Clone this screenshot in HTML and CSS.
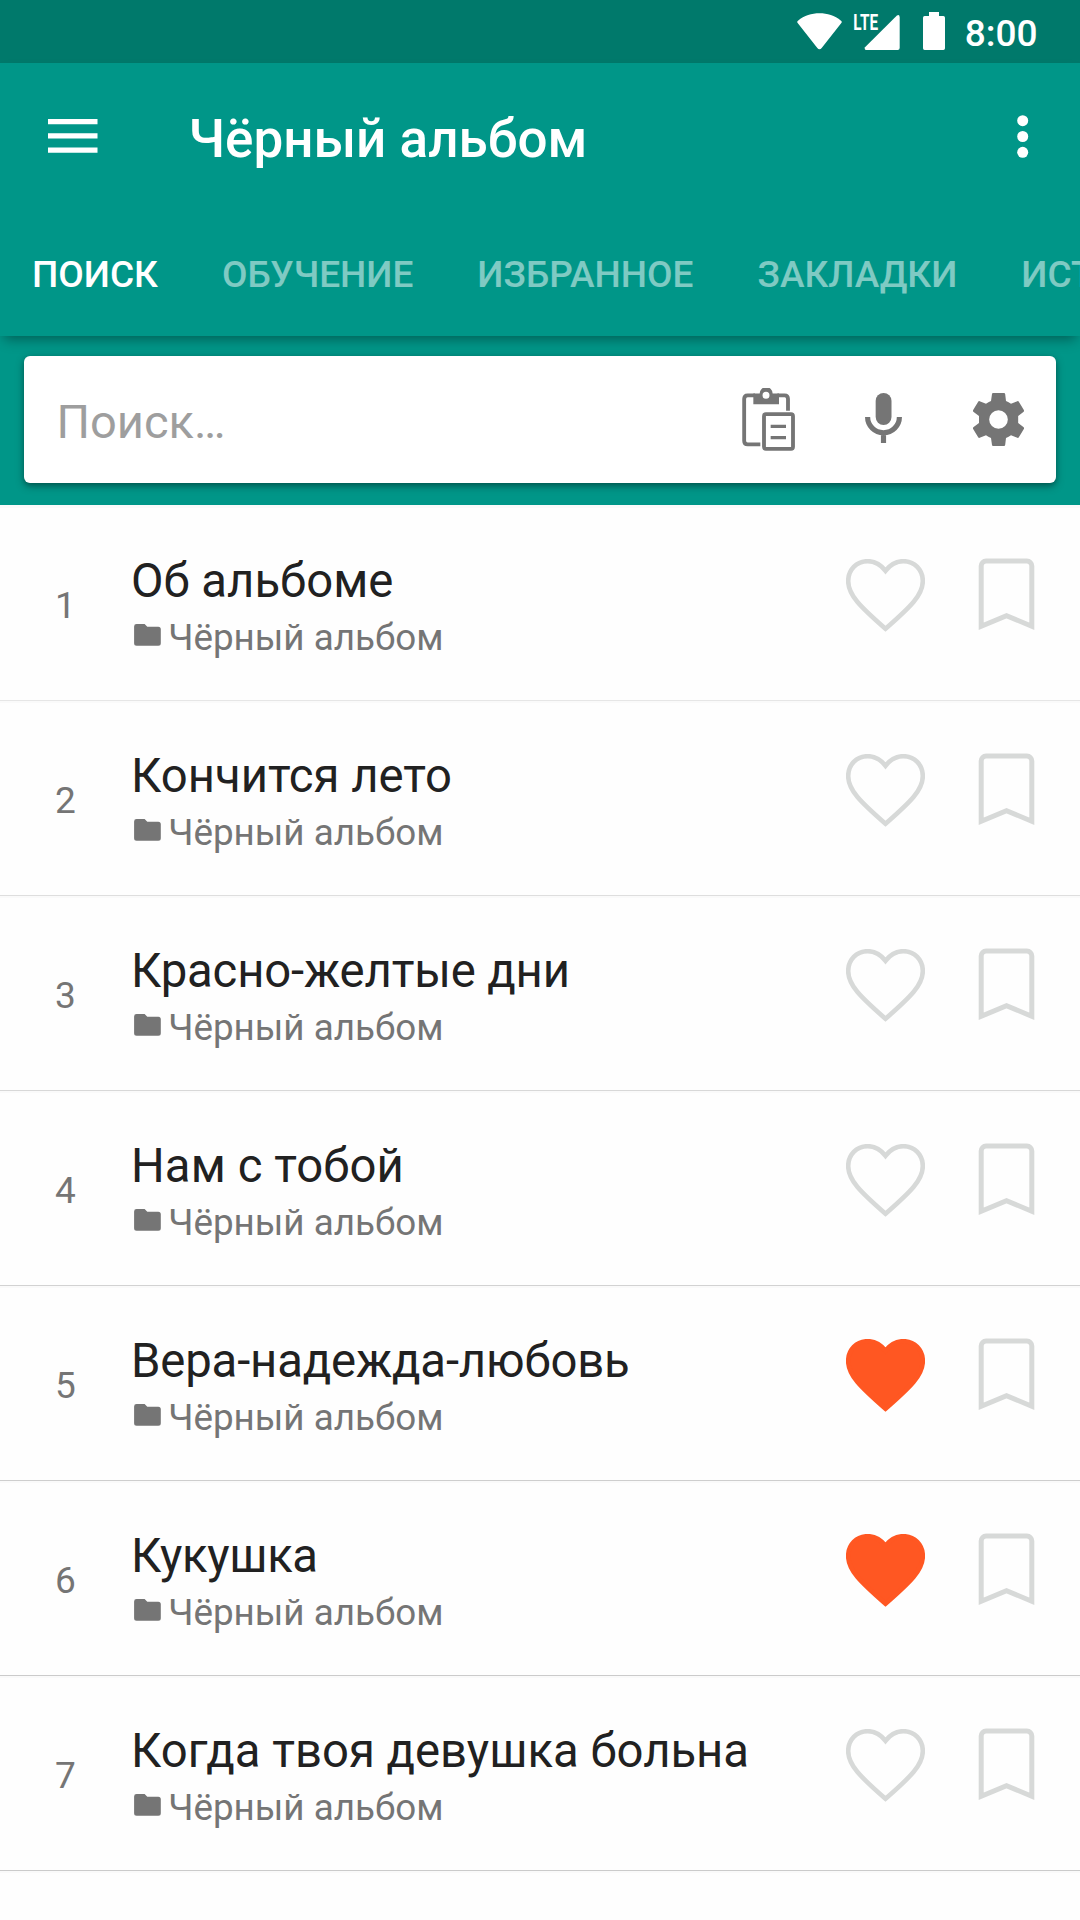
FILE: index.html
```html
<!DOCTYPE html>
<html lang="ru">
<head>
<meta charset="utf-8">
<title>Чёрный альбом</title>
<link rel="stylesheet" href="styles.css">
</head>
<body>
<svg class="sprite" aria-hidden="true">
  <symbol id="folder" viewBox="0 0 27 22"><path d="M2.6 0H10.6L13.3 2.7H24.3A2.5 2.5 0 0 1 26.8 5.2V19.2A2.5 2.5 0 0 1 24.3 21.7H2.6A2.5 2.5 0 0 1 .1 19.2V2.6A2.5 2.5 0 0 1 2.6 0Z"/></symbol>
  <symbol id="heart" viewBox="0 0 79 73"><path d="M39.5 11.7C35 6 28.5 2.2 21.7 2.2C10.5 2.2 2.2 11 2.2 22C2.2 36 14 47.5 39.5 69.8C65 47.5 76.8 36 76.8 22C76.8 11 68.5 2.2 57.3 2.2C50.5 2.2 44 6 39.5 11.7Z"/></symbol>
  <symbol id="bookmark" viewBox="0 0 57 73"><path d="M3.2 68.3V8A5 5 0 0 1 8.2 3H48.8A5 5 0 0 1 53.8 8V68.3L28.5 57.6Z"/></symbol>
</svg>

<header class="status-bar">
  <svg class="wifi" viewBox="0 0 135 111"><path d="M67.500 109Q64 109 61 105L2 30Q-1 26 3 23C22 8 44 1 67.500 1S113 8 132 23Q136 26 133 30L74 105Q71 109 67.500 109Z"/></svg>
  <svg class="signal" viewBox="0 0 141 111"><path d="M140 12V105Q140 111 134 111H38Q33 109 36 103L131 8Q139 2 140 12Z"/><text x="1" y="50" textLength="74" lengthAdjust="spacingAndGlyphs">LTE</text></svg>
  <svg class="battery" viewBox="0 0 66 114"><path d="M18 0H48V12H61Q66 12 66 17V109Q66 114 61 114H5Q0 114 0 109V17Q0 12 5 12H18Z"/></svg>
  <span class="clock">8:00</span>
</header>

<div class="app-bar">
  <div class="toolbar">
    <svg class="menu" viewBox="0 0 50 34"><path d="M0 0H49.500V5.300H0ZM0 14.200H49.500V19.500H0ZM0 28.400H49.500V33.700H0Z"/></svg>
    <h1 class="title">Чёрный альбом</h1>
    <svg class="more" viewBox="0 0 12 44"><circle cx="5.700" cy="5.700" r="5.500"/><circle cx="5.700" cy="21.500" r="5.500"/><circle cx="5.700" cy="37.300" r="5.500"/></svg>
  </div>
  <nav class="tabs">
    <span class="tab active">ПОИСК</span>
    <span class="tab">ОБУЧЕНИЕ</span>
    <span class="tab">ИЗБРАННОЕ</span>
    <span class="tab">ЗАКЛАДКИ</span>
    <span class="tab">ИСТОРИЯ</span>
  </nav>
</div>

<section class="search-panel">
  <div class="search-card">
    <span class="hint">Поиск…</span>
    <svg class="clipboard" viewBox="126 144 162 192">
      <g fill="none" stroke="#757575" stroke-width="11.500">
        <path d="M181 313H143Q132.500 313 132.500 302V177Q132.500 166 143 166H165M232 166H254Q264 166 264 177V212"/>
        <rect x="192" y="222.500" width="87" height="104" rx="6"/>
      </g>
      <path fill="#757575" fill-rule="evenodd" d="M160 160.500H179A19.500 19.500 0 0 1 218 160.500H237V193H160ZM198 155A10.500 10.500 0 1 0 198 176A10.500 10.500 0 1 0 198 155Z"/>
      <path fill="#757575" d="M212 254H258V264H212ZM212 288H258V298H212Z"/>
    </svg>
    <svg class="mic" viewBox="495 159 111 150">
      <rect x="527" y="159" width="47.500" height="96" rx="23.700" fill="#757575"/>
      <path d="M502.800 231A47.700 47.200 0 0 0 598.200 231M550.500 278V309" fill="none" stroke="#757575" stroke-width="15.500"/>
    </svg>
    <svg class="gear" viewBox="816 156 159 165"><path fill="#757575" fill-rule="evenodd" d="M879 159H912Q915 159 915.500 162L918 183Q926 186 933 191L952 183.500Q955 182.500 956.500 185L971.500 210Q973 213 971 215L954.500 228V249L971 262Q973 264 971.500 267L956.500 292Q955 294.500 952 293.500L933 286Q926 291 918 294L915.500 315Q915 318 912 318H879Q876.500 318 876 315L873 294Q865 291 858 286L839 293.500Q836 294.500 834.500 292L819.500 267Q818 264 820 262L837 249V228L820 215Q818 213 819.500 210L834.500 185Q836 182.500 839 183.500L858 191Q865 186 873 183L876 162Q876.500 159 879 159ZM895.500 210.500A28 28 0 1 0 895.500 266.500A28 28 0 1 0 895.500 210.500Z"/></svg>
  </div>
</section>

<main class="songs">
  <article class="song"><span class="num">1</span><div class="info"><h2 class="name">Об альбоме</h2><p class="album"><svg class="folder"><use href="#folder"/></svg>Чёрный альбом</p></div><svg class="heart"><use href="#heart"/></svg><svg class="bookmark"><use href="#bookmark"/></svg></article>
  <article class="song"><span class="num">2</span><div class="info"><h2 class="name">Кончится лето</h2><p class="album"><svg class="folder"><use href="#folder"/></svg>Чёрный альбом</p></div><svg class="heart"><use href="#heart"/></svg><svg class="bookmark"><use href="#bookmark"/></svg></article>
  <article class="song"><span class="num">3</span><div class="info"><h2 class="name snug">Красно-желтые дни</h2><p class="album"><svg class="folder"><use href="#folder"/></svg>Чёрный альбом</p></div><svg class="heart"><use href="#heart"/></svg><svg class="bookmark"><use href="#bookmark"/></svg></article>
  <article class="song"><span class="num">4</span><div class="info"><h2 class="name loose">Нам с тобой</h2><p class="album"><svg class="folder"><use href="#folder"/></svg>Чёрный альбом</p></div><svg class="heart"><use href="#heart"/></svg><svg class="bookmark"><use href="#bookmark"/></svg></article>
  <article class="song"><span class="num">5</span><div class="info"><h2 class="name snug">Вера-надежда-любовь</h2><p class="album"><svg class="folder"><use href="#folder"/></svg>Чёрный альбом</p></div><svg class="heart liked"><use href="#heart"/></svg><svg class="bookmark"><use href="#bookmark"/></svg></article>
  <article class="song"><span class="num">6</span><div class="info"><h2 class="name tight">Кукушка</h2><p class="album"><svg class="folder"><use href="#folder"/></svg>Чёрный альбом</p></div><svg class="heart liked"><use href="#heart"/></svg><svg class="bookmark"><use href="#bookmark"/></svg></article>
  <article class="song"><span class="num">7</span><div class="info"><h2 class="name">Когда твоя девушка больна</h2><p class="album"><svg class="folder"><use href="#folder"/></svg>Чёрный альбом</p></div><svg class="heart"><use href="#heart"/></svg><svg class="bookmark"><use href="#bookmark"/></svg></article>
  <div class="list-end"></div>
</main>
</body>
</html>
```
FILE: styles.css
```css
* { box-sizing: border-box; margin: 0; padding: 0; }
body {
  width: 1080px;
  height: 1920px;
  overflow: hidden;
  display: flex;
  flex-direction: column;
  background: #fefefe;
  font-family: Roboto, sans-serif;
}
svg { display: block; flex: none; }
.sprite { display: none; }

/* Status bar */
.status-bar {
  flex: none;
  height: 63px;
  display: flex;
  align-items: flex-start;
  justify-content: flex-end;
  padding-right: 42.5px;
  background: #00796b;
  color: #fff;
  fill: #fff;
}
.wifi { width: 45px; height: 37px; margin: 12.700px 11.300px 0 0; }
.signal { width: 47px; height: 37px; margin: 13px 23px 0 0; overflow: visible; }
.signal text { font-size: 67px; font-weight: 700; }
.battery { width: 22px; height: 38px; margin: 12px 19.700px 0 0; }
.clock { font-size: 37px; font-weight: 500; line-height: 44px; margin-top: 12px; }

/* App bar */
.app-bar {
  flex: none;
  height: 273px;
  position: relative;
  z-index: 1;
  background: #009688;
  color: #fff;
  box-shadow: 0 7px 12px -4px rgba(0, 0, 0, .38);
}
.toolbar { height: 147px; display: flex; align-items: flex-start; fill: #fff; }
.menu { width: 50px; height: 34px; margin: 56px 90.500px 0 48px; }
.title { flex: 1; font-size: 53px; font-weight: 500; line-height: 56px; margin-top: 48px; }
.more { width: 12px; height: 44px; margin: 52px 51px 0 0; }
.tabs { display: flex; height: 126px; align-items: center; padding-top: 3px; overflow: hidden; }
.tab {
  flex: none;
  padding: 0 32px;
  font-size: 37px;
  line-height: 44px;
  font-weight: 500;
  color: rgba(255, 255, 255, .5);
}
.tab.active { color: #fff; }

/* Search */
.search-panel { flex: none; height: 169px; padding: 20px 24px 22px; background: #009688; }
.search-card {
  height: 127px;
  display: flex;
  align-items: center;
  padding: 0 31px 0 32.500px;
  background: #fff;
  border-radius: 6px;
  box-shadow: 0 3px 9px rgba(0, 0, 0, .35), 0 2px 4px rgba(0, 0, 0, .15);
}
.hint { flex: 1; font-size: 47px; line-height: 56px; padding-top: 5px; color: #9e9e9e; }
.clipboard { width: 54px; height: 64px; margin-right: 69px; }
.mic { width: 37px; height: 50px; margin: 0 70px 3px 0; }
.gear { width: 53px; height: 55px; }

/* Song list */
.songs { flex: 1; padding-top: 1px; background: #fafafa; }
.song {
  height: 195px;
  display: flex;
  align-items: flex-start;
  padding-right: 45px;
  background: #fefefe;
  border-top: 2px solid #fafafa;
  border-bottom: 1px solid #cbcbcb;
}
.song:nth-child(1) { border-bottom-color: #e6e6e6; }
.song:nth-child(2) { border-bottom-color: #dedede; }
.song:nth-child(3) { border-bottom-color: #d8d8d8; }
.song:nth-child(4) { border-bottom-color: #d2d2d2; }
.song:nth-child(5) { border-bottom-color: #cecece; }
.num { width: 131px; text-align: center; font-size: 37px; line-height: 44px; margin-top: 76px; color: #757575; }
.info { flex: 1; padding-top: 45px; }
.name { font-size: 47.250px; font-weight: 400; line-height: 56px; color: #212121; white-space: nowrap; }
.name.snug { letter-spacing: -.15px; }
.name.tight { letter-spacing: -.35px; }
.name.loose { letter-spacing: .12px; }
.album {
  display: flex;
  margin-top: 7px;
  padding-left: 2.500px;
  font-size: 36.800px;
  line-height: 44px;
  color: #757575;
}
.folder { width: 27px; height: 22px; margin: 8px 7.700px 0 0; fill: #757575; }
.heart { width: 79px; height: 73px; margin: 50.600px 53px 0 0; fill: none; stroke: #d7d9d8; stroke-width: 4.600px; }
.heart.liked { fill: #ff5722; stroke: #ff5722; }
.bookmark { width: 57px; height: 73px; margin-top: 50px; fill: none; stroke: #d7d9d8; stroke-width: 5px; }
.list-end { height: 60px; margin-top: 2px; background: #fefefe; }
```
